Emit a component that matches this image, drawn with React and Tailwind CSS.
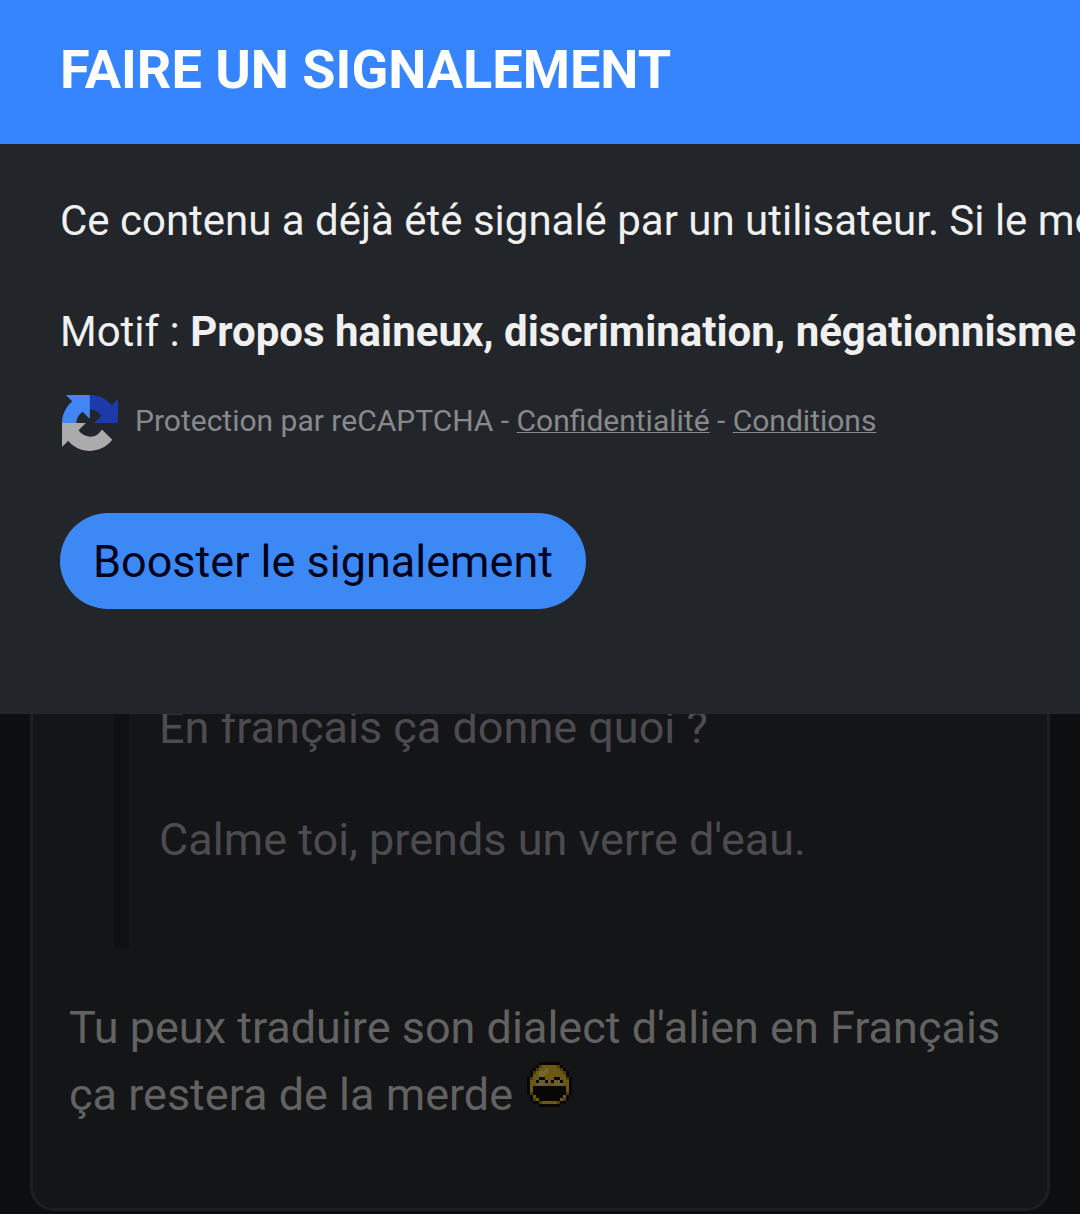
const SMILEY = [
  '....kkkkkkk....',
  '...kdyyyyydk...',
  '..kdyylyyyydk..',
  '.kdylllyyyyydk.',
  '.kyyllyyyyyyyk.',
  'kdyykkyyykkyydk',
  'kyykwwkykwwkyyk',
  'kyywwwyyywwwyyk',
  'kykkkkkkkkkkkyk',
  'kykkkkkkkkkkkyk',
  'kdkkkkkkkkkkkdk',
  '.kykkkkkkkkkyk.',
  '.kdykkkkkkkydk.',
  '..kkdyyyyydkk..',
  '....kkkkkkk....',
]

const SMILEY_COLORS = { k: '#080703', y: '#6b5814', d: '#4b3a0b', l: '#75682a', w: '#67602f' }

function Smiley() {
  return (
    <svg viewBox="0 0 15 15" shapeRendering="crispEdges" className="inline-block w-[45px] h-[45px] ml-[3px] mb-[3px] align-baseline">
      {SMILEY.map((row, y) =>
        row.split('').map((c, x) =>
          c === '.' ? null : <rect key={`${x}-${y}`} x={x} y={y} width="1" height="1" fill={SMILEY_COLORS[c]} />
        )
      )}
    </svg>
  )
}

function RecaptchaLogo() {
  return (
    <svg viewBox="0 0 64 64" className="w-14 h-14 shrink-0">
      <path fill="#1c3aa9" d="M64 31.955l-.033-1.37V4.687l-7.16 7.16C50.948 4.674 42.033.093 32.05.093c-10.4 0-19.622 4.96-25.458 12.64l11.736 11.86a15.55 15.55 0 0 1 4.754-5.334c2.05-1.6 4.952-2.906 8.968-2.906.485 0 .86.057 1.135.163 4.976.393 9.288 3.14 11.828 7.124l-8.307 8.307L64 31.953" />
      <path fill="#4285f4" d="M31.862.094l-1.37.033H4.594l7.16 7.16C4.58 13.147 0 22.06 0 32.046c0 10.4 4.96 19.622 12.64 25.458L24.5 45.768a15.55 15.55 0 0 1-5.334-4.754c-1.6-2.05-2.906-4.952-2.906-8.968 0-.485.057-.86.163-1.135.393-4.976 3.14-9.288 7.124-11.828l8.307 8.307L31.86.095" />
      <path fill="#ababab" d="M.001 32.045l.033 1.37v25.898l7.16-7.16c5.86 7.173 14.774 11.754 24.76 11.754 10.4 0 19.622-4.96 25.458-12.64l-11.736-11.86a15.55 15.55 0 0 1-4.754 5.334c-2.05 1.6-4.952 2.906-8.968 2.906-.485 0-.86-.057-1.135-.163-4.976-.393-9.288-3.14-11.828-7.124l8.307-8.307c-10.522.04-22.4.066-27.295-.005" />
    </svg>
  )
}

function ReportDialog() {
  return (
    <section className="h-[714px] bg-[#22262a] overflow-hidden">
      <header className="h-36 bg-[#3685ff] pl-[60px] pt-[38px]">
        <h1 className="text-[54px] leading-[63px] font-bold text-white whitespace-nowrap">FAIRE UN SIGNALEMENT</h1>
      </header>
      <div className="pl-[60px] pt-[45px] text-[42px] leading-[63px] text-[#f0f0f0] whitespace-nowrap">
        <p className="tracking-[-0.01px]">Ce contenu a déjà été signalé par un utilisateur. Si le motif</p>
        <p className="mt-12">
          Motif : <strong className="font-bold">Propos haineux, discrimination, négationnisme</strong>
        </p>
        <div className="flex items-start gap-[17px] mt-8 ml-[2px] text-[30px] leading-[45px] text-[#88898b]">
          <RecaptchaLogo />
          <span className="mt-[3px]">
            Protection par reCAPTCHA - <a className="underline decoration-1">Confidentialité</a> -{' '}
            <a className="underline decoration-1">Conditions</a>
          </span>
        </div>
        <button className="block mt-[62px] w-[526px] h-24 rounded-full bg-[#3c89f5] text-[45px] leading-none text-[#02021a]">
          Booster le signalement
        </button>
      </div>
    </section>
  )
}

function Post() {
  return (
    <article className="mx-[30px] h-[497px] border-[3px] border-t-0 border-[#1d1e20] rounded-b-[24px] bg-[#141517] text-[45px] leading-[67px]">
      <div className="h-[234px] overflow-hidden ml-[81px] border-l-[15px] border-[#0f1012] pl-[30px] text-[#4c4b4f] whitespace-nowrap">
        <p className="-mt-[20px]">En français ça donne quoi ?</p>
        <p className="mt-[45px]">Calme toi, prends un verre d'eau.</p>
      </div>
      <p className="mt-[46px] ml-[36px] text-[#626261] whitespace-nowrap">
        Tu peux traduire son dialect d'alien en Français
        <br />
        ça restera de la merde <Smiley />
      </p>
    </article>
  )
}

export default function App() {
  return (
    <main className="w-[1080px] h-[1214px] overflow-hidden bg-[#0d0e10] font-[Roboto,sans-serif]">
      <ReportDialog />
      <Post />
    </main>
  )
}
